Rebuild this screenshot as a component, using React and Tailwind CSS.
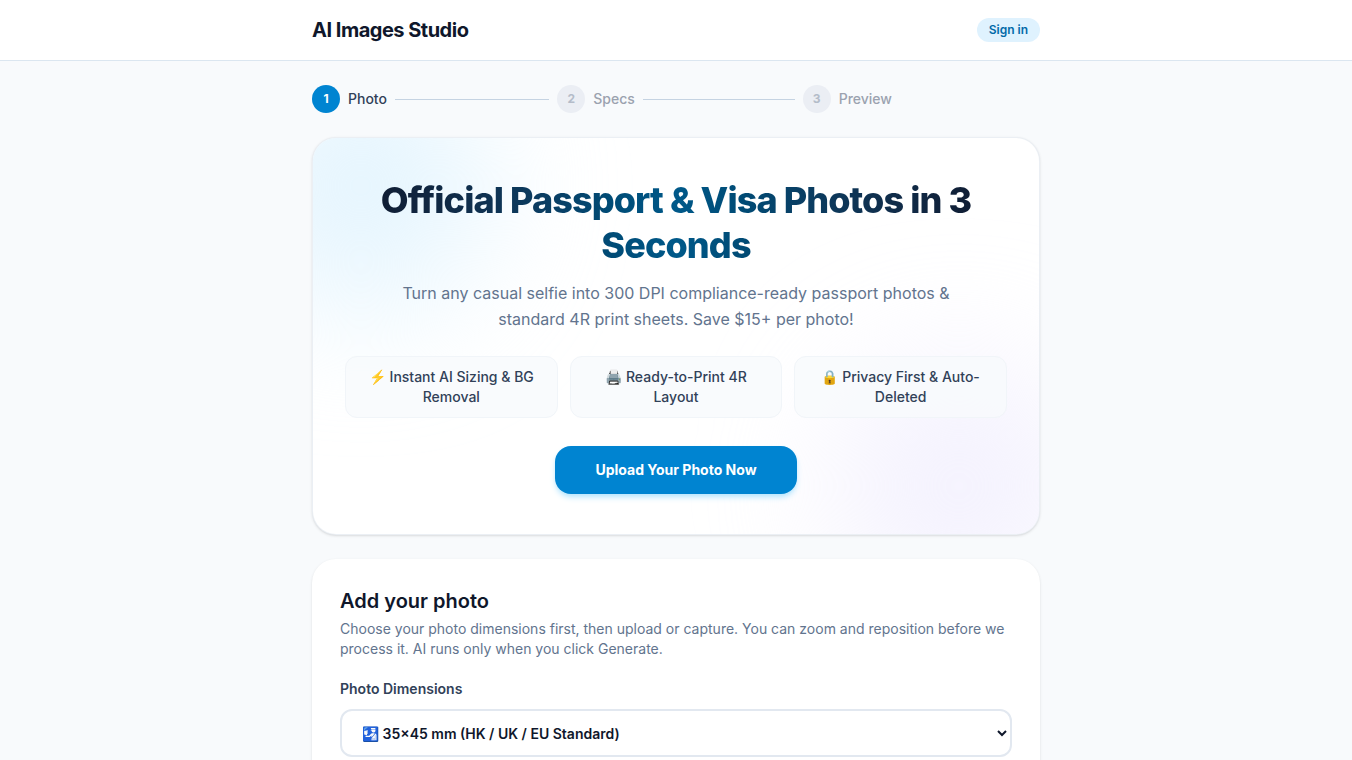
import { useRef, useState } from 'react';

const STEPS = ['Photo', 'Specs', 'Preview'];

const FEATURES = [
  '⚡ Instant AI Sizing & BG Removal',
  '🖨️ Ready-to-Print 4R Layout',
  '🔒 Privacy First & Auto-Deleted',
];

const DIMENSIONS = [
  { value: '35x45', label: '🛂 35×45 mm (HK / UK / EU Standard)' },
  { value: '2x2', label: '🇺🇸 2×2 in (US Passport / Visa)' },
  { value: '33x48', label: '🇨🇳 33×48 mm (China)' },
];

function Header() {
  return (
    <header className="border-b border-[#dbe6f0] bg-white">
      <div className="mx-auto flex max-w-3xl items-center justify-between px-5 py-4">
        <a href="#" className="text-xl font-bold tracking-tight text-slate-900">
          AI Images Studio
        </a>
        <button type="button" className="rounded-full bg-sky-100 px-3 py-1 text-xs font-semibold text-sky-700">
          Sign in
        </button>
      </div>
    </header>
  );
}

function Stepper({ current }) {
  return (
    <ol className="flex items-center gap-2">
      {STEPS.map((label, i) => {
        const active = i === current;
        return (
          <li key={label} className="flex flex-1 items-center gap-2">
            <span
              className={
                active
                  ? 'flex size-7 shrink-0 items-center justify-center rounded-full bg-[#0084d1] text-xs font-bold text-white'
                  : 'flex size-7 shrink-0 items-center justify-center rounded-full bg-[#ebeef4] text-xs font-bold text-[#b4bcc9]'
              }
            >
              {i + 1}
            </span>
            <span className={active ? 'text-sm font-medium text-slate-700' : 'text-sm font-medium text-[#9ba2af]'}>
              {label}
            </span>
            {i < STEPS.length - 1 && <span className="h-px flex-1 bg-[#c5d3e2]" />}
          </li>
        );
      })}
    </ol>
  );
}

function Hero({ onUpload }) {
  return (
    <section className="relative overflow-hidden rounded-3xl border border-slate-200/70 bg-white px-8 py-10 text-center shadow-sm">
      {/* soft colour blobs behind the copy */}
      <div className="pointer-events-none absolute -top-20 -left-20 size-64 rounded-full bg-sky-100/80 blur-3xl" />
      <div className="pointer-events-none absolute -right-12 -bottom-20 size-64 rounded-full bg-violet-100/60 blur-3xl" />

      <div className="relative">
        <h1 className="bg-linear-to-r from-slate-900 via-sky-800 to-slate-900 bg-clip-text text-4xl leading-tight font-extrabold tracking-tight text-transparent">
          Official Passport &amp; Visa Photos in 3 Seconds
        </h1>
        <p className="mx-auto mt-3 max-w-xl text-base leading-[26px] text-slate-500">
          Turn any casual selfie into 300 DPI compliance-ready passport photos &amp; standard 4R print sheets. Save $15+ per photo!
        </p>
        <ul className="mt-6 grid grid-cols-3 gap-3">
          {FEATURES.map((text) => (
            <li
              key={text}
              className="rounded-xl border border-slate-100 bg-slate-50/80 px-4 py-2.5 text-sm font-medium text-slate-700"
            >
              {text}
            </li>
          ))}
        </ul>
        <button
          type="button"
          onClick={onUpload}
          className="mt-7 h-12 rounded-2xl bg-[#0084d1] px-10 text-sm font-bold text-white shadow-md shadow-sky-200"
        >
          Upload Your Photo Now
        </button>
      </div>
    </section>
  );
}

function AddPhoto({ sectionRef }) {
  const [size, setSize] = useState('35x45');

  return (
    <section ref={sectionRef} className="rounded-3xl bg-white p-7 shadow-sm">
      <h2 className="text-xl font-semibold text-slate-900">Add your photo</h2>
      <p className="mt-1 text-sm text-slate-500">
        Choose your photo dimensions first, then upload or capture. You can zoom and reposition before we process it. AI
        runs only when you click Generate.
      </p>
      <label htmlFor="dimensions" className="mt-5 block text-sm font-semibold text-slate-700">
        Photo Dimensions
      </label>
      <select
        id="dimensions"
        value={size}
        onChange={(e) => setSize(e.target.value)}
        className="mt-2.5 h-12 w-full rounded-xl border-2 border-slate-200 bg-white px-4 text-sm font-semibold text-slate-900"
      >
        {DIMENSIONS.map((d) => (
          <option key={d.value} value={d.value}>
            {d.label}
          </option>
        ))}
      </select>
    </section>
  );
}

export default function App() {
  const photoRef = useRef(null);

  const handleUpload = () => {
    photoRef.current?.scrollIntoView({ behavior: 'smooth' });
  };

  return (
    <div className="min-h-screen bg-slate-50 font-['Inter','Noto_Sans',sans-serif]">
      <Header />
      <main className="mx-auto flex max-w-3xl flex-col gap-6 px-5 py-6">
        <Stepper current={0} />
        <Hero onUpload={handleUpload} />
        <AddPhoto sectionRef={photoRef} />
      </main>
    </div>
  );
}
